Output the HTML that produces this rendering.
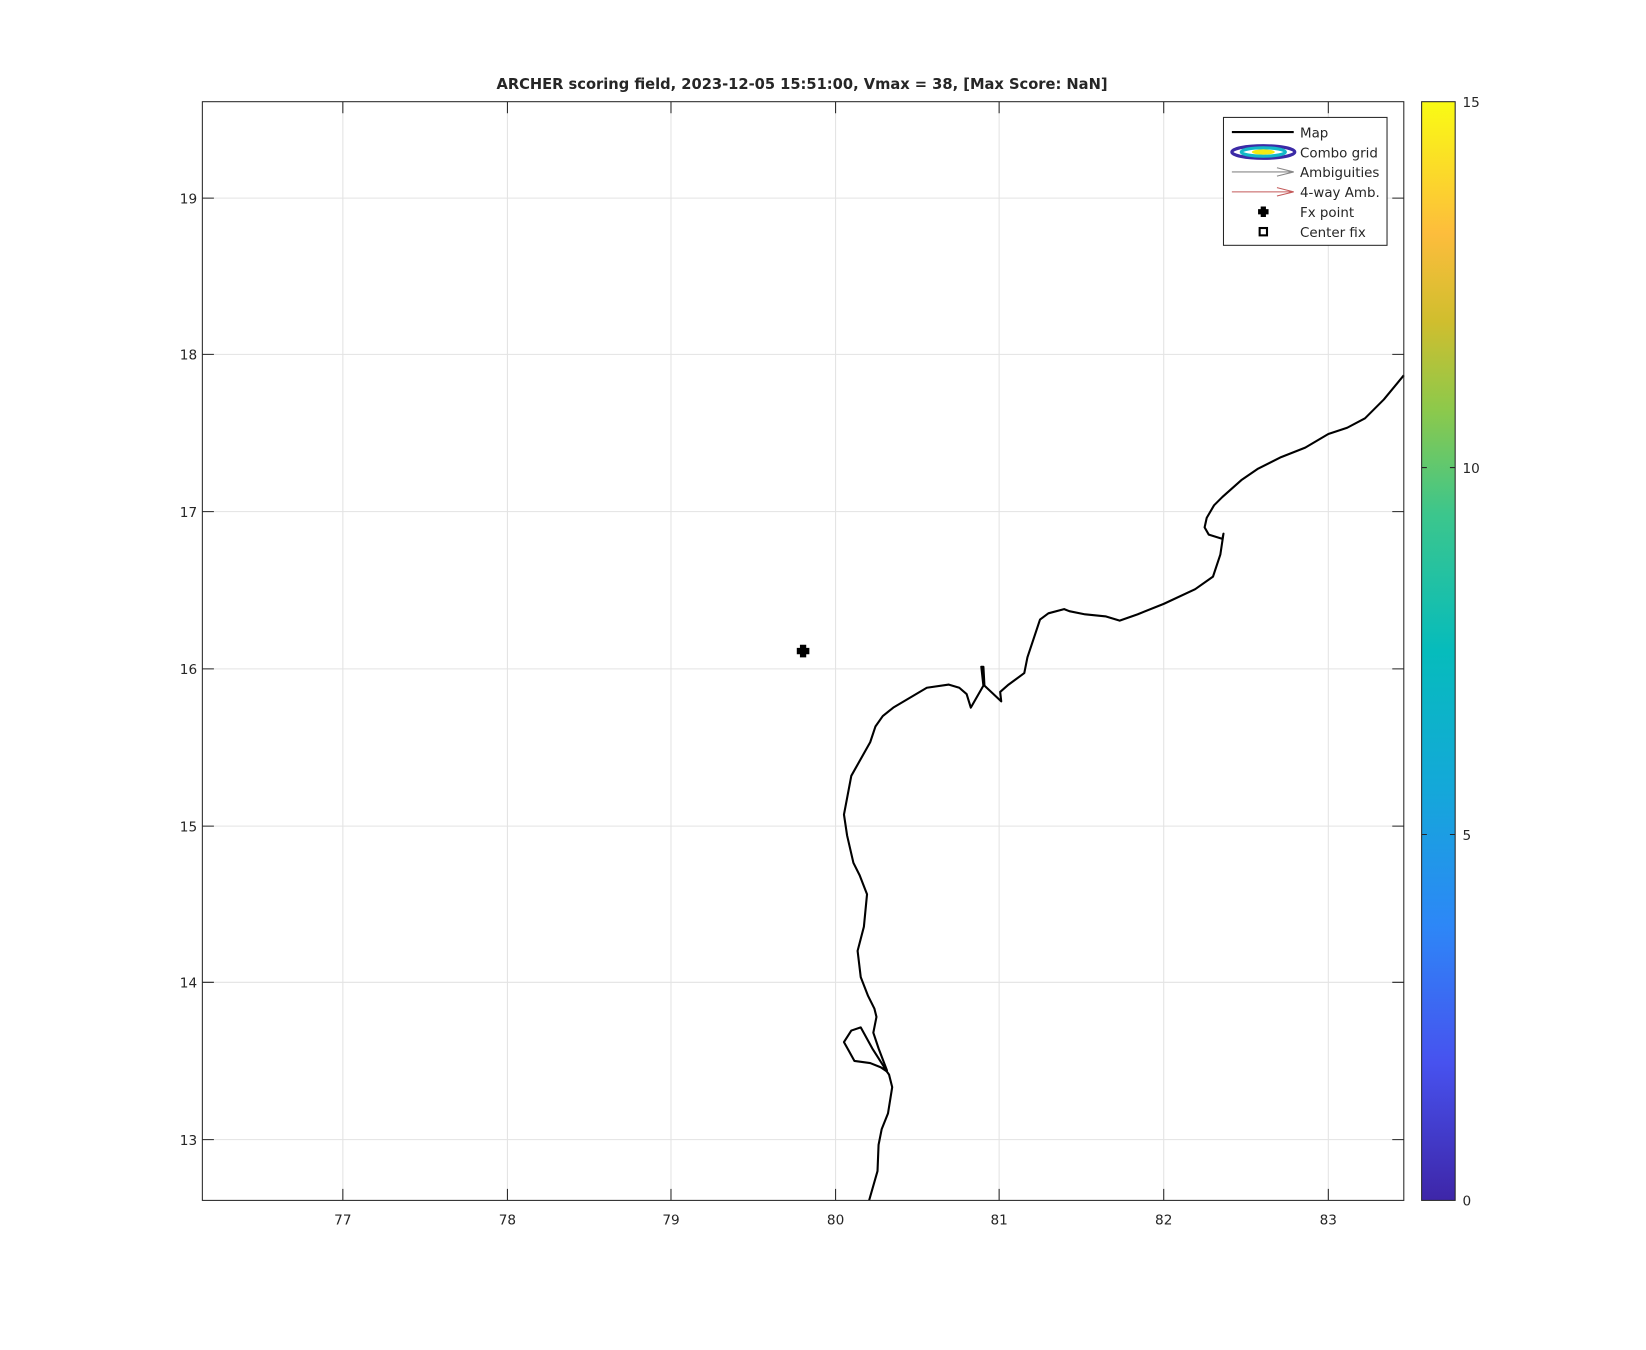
<!DOCTYPE html>
<html><head><meta charset="utf-8"><style>
html,body{margin:0;padding:0;background:#fff;}
svg{display:block;}
text{font-family:"DejaVu Sans","Liberation Sans",sans-serif;fill:#262626;}
</style></head><body>
<svg width="1646" height="1350" viewBox="0 0 1570 1287.7" xmlns="http://www.w3.org/2000/svg">
<defs>
<linearGradient id="par" x1="0" y1="1" x2="0" y2="0">
<stop offset="0" stop-color="#3e26a8"/>
<stop offset="0.125" stop-color="#4752ef"/>
<stop offset="0.25" stop-color="#2d87f7"/>
<stop offset="0.375" stop-color="#14a8d9"/>
<stop offset="0.5" stop-color="#06bcbc"/>
<stop offset="0.625" stop-color="#3cc68c"/>
<stop offset="0.72" stop-color="#8dc94b"/>
<stop offset="0.8" stop-color="#d0be2e"/>
<stop offset="0.88" stop-color="#fdbd3c"/>
<stop offset="1" stop-color="#f9fb14"/>
</linearGradient>
</defs>
<rect width="1570" height="1288" fill="#fff"/>
<text x="765" y="85" text-anchor="middle" font-size="14" font-weight="bold">ARCHER scoring field, 2023-12-05 15:51:00, Vmax = 38, [Max Score: NaN]</text>
<g stroke="#e3e3e3" stroke-width="1">
<line x1="327" y1="97" x2="327" y2="1145"/><line x1="484" y1="97" x2="484" y2="1145"/>
<line x1="640" y1="97" x2="640" y2="1145"/><line x1="797" y1="97" x2="797" y2="1145"/>
<line x1="953" y1="97" x2="953" y2="1145"/><line x1="1110" y1="97" x2="1110" y2="1145"/>
<line x1="1267" y1="97" x2="1267" y2="1145"/>
<line x1="193" y1="189" x2="1339" y2="189"/><line x1="193" y1="338" x2="1339" y2="338"/>
<line x1="193" y1="488" x2="1339" y2="488"/><line x1="193" y1="638" x2="1339" y2="638"/>
<line x1="193" y1="788" x2="1339" y2="788"/><line x1="193" y1="937" x2="1339" y2="937"/>
<line x1="193" y1="1087" x2="1339" y2="1087"/>
</g>
<g stroke="#262626" stroke-width="1">
<path d="M327 1145v-11M484 1145v-11M640 1145v-11M797 1145v-11M953 1145v-11M1110 1145v-11M1267 1145v-11M327 97v11M484 97v11M640 97v11M797 97v11M953 97v11M1110 97v11M1267 97v11"/>
<path d="M193 189h11M193 338h11M193 488h11M193 638h11M193 788h11M193 937h11M193 1087h11M1339 189h-11M1339 338h-11M1339 488h-11M1339 638h-11M1339 788h-11M1339 937h-11M1339 1087h-11"/>
</g>
<g fill="none" stroke="#000" stroke-width="2" stroke-linejoin="round">
<polyline points="829,1145 837,1117 838,1092 841,1077 847,1062 851,1037 848,1025 843,1018 846,1021 838,1000 833,985 836,970 834,962 828,950 821,932 818,907 824,884 827,853 820,835 814,823 808,797 805,777 812,740 830,708 835,693 842,683 852,675 884,656 905,653 915,656 922,662 926,675 938,654 936,636 938,636 939,654 955,669 954,660 962,653 977,642 980,627 992,591 1000,585 1015,581 1020,583 1035,586 1055,588 1068,592 1085,586 1110,576 1140,562 1157,550 1164,529 1167,509 1166,514 1153,510 1149,503 1151,494 1158,482 1166,474 1184,458 1200,447 1222,436 1245,427 1267,414 1285,408 1302,399 1320,381 1339,358"/>
<polyline points="846,1022 832,1000 821,980 812,983 805,994 810,1003 815,1012 830,1014 840,1018 846,1022"/>
</g>
<rect x="193" y="97" width="1146" height="1048" fill="none" stroke="#262626" stroke-width="1"/>
<g font-size="13" text-anchor="middle">
<text x="327" y="1168">77</text><text x="484" y="1168">78</text><text x="640" y="1168">79</text>
<text x="797" y="1168">80</text><text x="953" y="1168">81</text><text x="1110" y="1168">82</text>
<text x="1267" y="1168">83</text>
</g>
<g font-size="13" text-anchor="end">
<text x="188" y="194">19</text><text x="188" y="343">18</text><text x="188" y="493">17</text>
<text x="188" y="643">16</text><text x="188" y="793">15</text><text x="188" y="942">14</text>
<text x="188" y="1092">13</text>
</g>
<path d="M766 615v12M760 621h12" stroke="#000" stroke-width="6"/>
<rect x="1167" y="112" width="156" height="122" fill="#fff" stroke="#262626" stroke-width="1"/>
<line x1="1175" y1="126" x2="1234" y2="126" stroke="#000" stroke-width="2"/>
<ellipse cx="1205" cy="145" rx="30" ry="6" fill="none" stroke="#3b2aa6" stroke-width="3"/>
<ellipse cx="1205" cy="145" rx="21" ry="4" fill="none" stroke="#13b8c8" stroke-width="3"/>
<ellipse cx="1205" cy="145" rx="11" ry="2.5" fill="#f4ea12"/>
<path d="M1175 164h59M1218 160l16 4-16 4" fill="none" stroke="#888" stroke-width="1"/>
<path d="M1175 183h59M1218 179l16 4-16 4" fill="none" stroke="#c45a5a" stroke-width="1"/>
<path d="M1205 197v10M1200 202h10" stroke="#000" stroke-width="5"/>
<rect x="1201.5" y="217.5" width="7" height="7" fill="none" stroke="#000" stroke-width="2"/>
<g font-size="12.8">
<text x="1240" y="131">Map</text><text x="1240" y="150">Combo grid</text>
<text x="1240" y="169">Ambiguities</text><text x="1240" y="188">4-way Amb.</text>
<text x="1240" y="207">Fx point</text><text x="1240" y="226">Center fix</text>
</g>
<rect x="1356" y="97" width="32" height="1048" fill="url(#par)" stroke="#262626" stroke-width="1"/>
<path d="M1388 446h-5M1388 796h-5M1356 446h5M1356 796h5" stroke="#262626"/>
<g font-size="13">
<text x="1395" y="102">15</text><text x="1395" y="451">10</text>
<text x="1395" y="801">5</text><text x="1395" y="1150">0</text>
</g>
</svg>
</body></html>
